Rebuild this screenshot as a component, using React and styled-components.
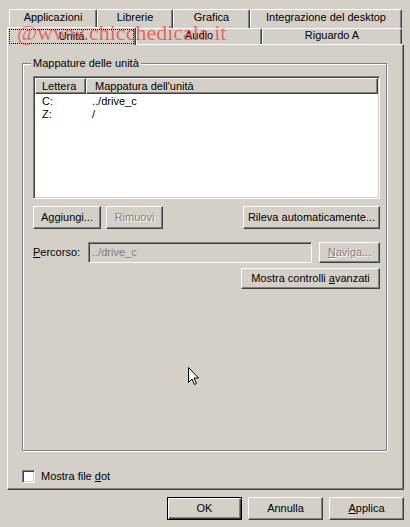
import React from 'react';
import styled, { createGlobalStyle, css } from 'styled-components';

const face = '#d4d0c8';
const shadow = '#808080';
const dark = '#404040';

const Global = createGlobalStyle`
  html, body { margin: 0; padding: 0; background: ${face}; }
  body {
    font-family: "Liberation Sans", Arial, sans-serif;
    font-size: 11px;
    line-height: 13px;
    color: #000;
  }
  * { box-sizing: border-box; }
`;

const Dialog = styled.div`
  position: relative;
  width: 410px;
  height: 527px;
  padding: 9px 6px 0 7px;
  display: flex;
  flex-direction: column;
  overflow: hidden;
`;

const TabRow = styled.div`
  display: flex;
  align-items: flex-end;
  flex: none;
  height: ${(p) => p.$h}px;
  padding-left: ${(p) => p.$indent}px;
`;

const Tab = styled.div`
  flex: none;
  width: ${(p) => p.$w}px;
  height: ${(p) => p.$h}px;
  padding-top: ${(p) => p.$pt}px;
  border-top: 1px solid #fff;
  border-left: 1px solid #fff;
  border-right: 1px solid ${dark};
  box-shadow: inset -1px 0 ${shadow};
  border-top-left-radius: 2px;
  border-top-right-radius: 2px;
  background: ${face};
  text-align: center;
  white-space: nowrap;
  ${(p) =>
    p.$selected &&
    css`
      position: relative;
      z-index: 1;
      margin-bottom: -1px;
      display: flex;
    `}
`;

const FocusRect = styled.span`
  flex: 1;
  height: 15px;
  margin: 1px 1px 0 1px;
  border: 1px dotted #000;
  line-height: 12px;
  text-align: center;
`;

const Panel = styled.div`
  flex: none;
  height: 446px;
  border-top: 1px solid #fff;
  border-left: 1px solid #fff;
  border-right: 1px solid ${dark};
  border-bottom: 1px solid ${dark};
  box-shadow: inset -1px -1px ${shadow};
  padding: 12px 16px 6px 14px;
  display: flex;
  flex-direction: column;
`;

const GroupBox = styled.fieldset`
  flex: 1;
  min-width: 0;
  margin: 0;
  padding: 0;
  border: 1px solid ${shadow};
  box-shadow: 1px 1px 0 #fff, inset 1px 1px 0 #fff;
`;

const Legend = styled.legend`
  margin-left: 8px;
  padding: 0 2px;
  line-height: 13px;
  background: ${face};
`;

const GroupContent = styled.div`
  padding: 6px 6px 0 10px;
  display: flex;
  flex-direction: column;
`;

const ListView = styled.div`
  height: 123px;
  background: #fff;
  border: 1px solid;
  border-color: ${shadow} #fff #fff ${shadow};
  box-shadow: inset 1px 1px ${dark}, inset -1px -1px ${face};
  padding: 1px;
  display: flex;
  flex-direction: column;
`;

const Header = styled.div`
  display: flex;
  height: 16px;
  flex: none;
`;

const HeaderCell = styled.div`
  width: ${(p) => (p.$w ? `${p.$w}px` : 'auto')};
  flex: ${(p) => (p.$w ? 'none' : '1')};
  padding: 1px 0 0 ${(p) => p.$pl}px;
  background: ${face};
  border-top: 1px solid #fff;
  border-left: 1px solid #fff;
  border-right: 1px solid ${dark};
  border-bottom: 1px solid ${dark};
  box-shadow: inset -1px -1px ${shadow};
  white-space: nowrap;
`;

const ListBody = styled.div`
  padding-top: 1px;
`;

const ListRow = styled.div`
  display: flex;
  height: 13px;
  padding-left: 7px;
`;

const Cell = styled.span`
  width: ${(p) => (p.$w ? `${p.$w}px` : 'auto')};
  flex: none;
  white-space: nowrap;
`;

const Row = styled.div`
  display: flex;
  align-items: center;
  gap: ${(p) => p.$gap || 0}px;
  margin-top: ${(p) => p.$mt || 0}px;
  justify-content: ${(p) => p.$justify || 'flex-start'};
`;

const Button = styled.button`
  flex: none;
  width: ${(p) => p.$w}px;
  height: ${(p) => p.$h || 23}px;
  margin-left: ${(p) => (p.$push ? 'auto' : '0')};
  padding: 0;
  font-family: inherit;
  font-size: 11px;
  line-height: 13px;
  color: #000;
  background: ${face};
  border: 1px solid;
  border-color: #fff ${dark} ${dark} #fff;
  box-shadow: inset -1px -1px ${shadow};
  white-space: nowrap;
  ${(p) =>
    p.$default &&
    css`
      border-color: #000;
      box-shadow: inset 1px 1px #fff, inset -1px -1px ${dark}, inset -2px -2px ${shadow};
    `}
  ${(p) =>
    p.disabled &&
    css`
      color: ${shadow};
      text-shadow: 1px 1px 0 #fff;
    `}
`;

const Label = styled.span`
  width: ${(p) => p.$w}px;
  flex: none;
  white-space: nowrap;
`;

const PathField = styled.div`
  width: 224px;
  height: 21px;
  flex: none;
  padding: 3px 0 0 3px;
  color: ${shadow};
  background: ${face};
  border: 1px solid;
  border-color: ${shadow} #fff #fff ${shadow};
  box-shadow: inset 1px 1px ${dark}, inset -1px -1px ${face};
  margin-right: 7px;
`;

const Accel = styled.span`
  text-decoration: underline;
`;

const CheckRow = styled.label`
  display: flex;
  align-items: center;
  gap: 6px;
  height: 13px;
  margin-top: 19px;
  flex: none;
`;

const CheckBox = styled.span`
  width: 13px;
  height: 13px;
  flex: none;
  background: #fff;
  border: 1px solid;
  border-color: ${shadow} #fff #fff ${shadow};
  box-shadow: inset 1px 1px ${dark}, inset -1px -1px ${face};
`;

const Footer = styled.div`
  display: flex;
  justify-content: flex-end;
  gap: 6px;
  margin-top: 7px;
  flex: none;
`;

const Watermark = styled.div`
  position: absolute;
  left: 17px;
  top: 22px;
  font-family: "Liberation Serif", "Times New Roman", serif;
  font-size: 22px;
  line-height: 22px;
  color: rgba(238, 60, 60, 0.72);
  white-space: nowrap;
  pointer-events: none;
  z-index: 5;
`;

const Cursor = styled.svg`
  position: absolute;
  left: 187px;
  top: 366px;
  z-index: 6;
`;

const topTabs = [
  { label: 'Applicazioni', w: 88 },
  { label: 'Librerie', w: 76 },
  { label: 'Grafica', w: 77 },
  { label: 'Integrazione del desktop', w: 152 },
];

const drives = [
  { letter: 'C:', path: '../drive_c' },
  { letter: 'Z:', path: '/' },
];

export default function App() {
  return (
    <>
      <Global />
      <Dialog>
        <TabRow $h={19} $indent={2}>
          {topTabs.map((t) => (
            <Tab key={t.label} $w={t.w} $h={19} $pt={1}>
              {t.label}
            </Tab>
          ))}
        </TabRow>
        <TabRow $h={16} $indent={0}>
          <Tab $w={129} $h={18} $pt={0} $selected>
            <FocusRect>Unità</FocusRect>
          </Tab>
          <Tab $w={126} $h={16} $pt={0}>Audio</Tab>
          <Tab $w={140} $h={16} $pt={0}>Riguardo A</Tab>
        </TabRow>
        <Panel>
          <GroupBox>
            <Legend>Mappature delle unità</Legend>
            <GroupContent>
              <ListView>
                <Header>
                  <HeaderCell $w={51} $pl={6}>Lettera</HeaderCell>
                  <HeaderCell $pl={8}>Mappatura dell'unità</HeaderCell>
                </Header>
                <ListBody>
                  {drives.map((d) => (
                    <ListRow key={d.letter}>
                      <Cell $w={50}>{d.letter}</Cell>
                      <Cell>{d.path}</Cell>
                    </ListRow>
                  ))}
                </ListBody>
              </ListView>
              <Row $mt={7} $gap={5}>
                <Button $w={68}>Aggiungi...</Button>
                <Button $w={57} disabled>Rimuovi</Button>
                <Button $w={137} $push>Rileva automaticamente...</Button>
              </Row>
              <Row $mt={13}>
                <Label $w={55}>
                  <Accel>P</Accel>ercorso:
                </Label>
                <PathField>../drive_c</PathField>
                <Button $w={61} $h={21} disabled>
                  <Accel>N</Accel>aviga...
                </Button>
              </Row>
              <Row $mt={5} $justify="flex-end">
                <Button $w={139} $h={21}>
                  Mostra controlli <Accel>a</Accel>vanzati
                </Button>
              </Row>
            </GroupContent>
          </GroupBox>
          <CheckRow>
            <CheckBox />
            <span>
              Mostra file <Accel>d</Accel>ot
            </span>
          </CheckRow>
        </Panel>
        <Footer>
          <Button $w={75} $default>OK</Button>
          <Button $w={75}>Annulla</Button>
          <Button $w={75}>
            <Accel>A</Accel>pplica
          </Button>
        </Footer>
        <Watermark>@www.chicchedicala.it</Watermark>
        <Cursor width="13" height="21" viewBox="0 0 13 21">
          <path
            d="M1.5 1.5 V16.5 L5 13 L7.5 18.5 L9.5 17.5 L7 12 H11.5 Z"
            fill="#fff"
            stroke="#000"
            strokeWidth="1"
            strokeLinejoin="miter"
          />
        </Cursor>
      </Dialog>
    </>
  );
}
